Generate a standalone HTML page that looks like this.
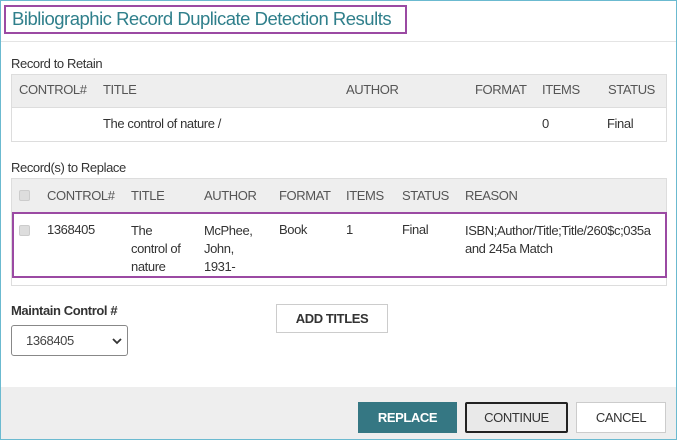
<!DOCTYPE html>
<html><head><meta charset="utf-8"><style>
*{margin:0;padding:0;box-sizing:border-box}
body{width:677px;height:440px;overflow:hidden;background:#fff;font-family:"Liberation Sans",Arial,sans-serif;font-size:13px;color:#333;letter-spacing:-0.4px;position:relative}
.a{position:absolute;white-space:nowrap}
.frame{position:absolute;left:0;top:0;width:677px;height:440px;border:1px solid #6bbad0}
.hdr{position:absolute;left:1px;top:41px;width:675px;border-top:1px solid #e4e4e4}
.tb{position:absolute;border:1px solid #ddd}
.th{background:#eee;position:absolute;left:0;right:0;border-bottom:1px solid #ddd}
.h{color:#555}
.cb{position:absolute;width:11px;height:11px;background:#ddd;border:1px solid #ccc;border-radius:2px}
.btn{position:absolute;display:flex;align-items:center;justify-content:center;font-size:13px;font-weight:bold}
</style></head><body>
<div class="frame"></div>
<div class="a" style="left:4px;top:5px;width:403px;height:29px;border:2px solid #9b4aa3"></div>
<div class="a" style="left:12px;top:8px;font-size:18.5px;color:#2f7f8b;letter-spacing:-0.5px">Bibliographic Record Duplicate Detection Results</div>
<div class="hdr"></div>

<div class="a" style="left:11px;top:56px">Record to Retain</div>
<div class="tb" style="left:11px;top:74px;width:656px;height:68px">
 <div class="th" style="top:0;height:33px"></div>
</div>
<div class="a h" style="left:19px;top:82px">CONTROL#</div>
<div class="a h" style="left:103px;top:82px">TITLE</div>
<div class="a h" style="left:346px;top:82px">AUTHOR</div>
<div class="a h" style="left:475px;top:82px">FORMAT</div>
<div class="a h" style="left:542px;top:82px">ITEMS</div>
<div class="a h" style="left:608px;top:82px">STATUS</div>
<div class="a" style="left:103px;top:116px">The control of nature /</div>
<div class="a" style="left:542px;top:116px">0</div>
<div class="a" style="left:607px;top:116px">Final</div>

<div class="a" style="left:11px;top:160px">Record(s) to Replace</div>
<div class="tb" style="left:11px;top:178px;width:656px;height:108px">
 <div class="th" style="top:0;height:34px"></div>
</div>
<div class="cb" style="left:19px;top:190px"></div>
<div class="a h" style="left:47px;top:188px">CONTROL#</div>
<div class="a h" style="left:131px;top:188px">TITLE</div>
<div class="a h" style="left:204px;top:188px">AUTHOR</div>
<div class="a h" style="left:279px;top:188px">FORMAT</div>
<div class="a h" style="left:346px;top:188px">ITEMS</div>
<div class="a h" style="left:402px;top:188px">STATUS</div>
<div class="a h" style="left:465px;top:188px">REASON</div>
<div class="a" style="left:12px;top:212px;width:655px;height:66px;border:2px solid #9b4aa3"></div>
<div class="cb" style="left:19px;top:225px"></div>
<div class="a" style="left:47px;top:222px">1368405</div>
<div class="a" style="left:131px;top:222px;line-height:18px">The<br>control of<br>nature</div>
<div class="a" style="left:204px;top:222px;line-height:18px">McPhee,<br>John,<br>1931-</div>
<div class="a" style="left:279px;top:222px">Book</div>
<div class="a" style="left:346px;top:222px">1</div>
<div class="a" style="left:402px;top:222px">Final</div>
<div class="a" style="left:465px;top:222px;line-height:18px">ISBN;Author/Title;Title/260$c;035a<br>and 245a Match</div>

<div class="a" style="left:11px;top:303px;font-weight:bold;color:#333">Maintain Control #</div>
<div class="a" style="left:11px;top:325px;width:117px;height:31px;border:1px solid #888;border-radius:3px"></div>
<div class="a" style="left:26px;top:333px;color:#444">1368405</div>
<svg class="a" style="left:112px;top:337px" width="10" height="8"><path d="M1 2 L5 6 L9 2" stroke="#333" stroke-width="1.8" fill="none"/></svg>
<div class="btn" style="left:276px;top:304px;width:112px;height:29px;border:1px solid #ccc;color:#333">ADD TITLES</div>

<div class="a" style="left:1px;top:387px;width:675px;height:52px;background:#eee"></div>
<div class="btn" style="left:358px;top:402px;width:99px;height:31px;background:#357783;color:#fff">REPLACE</div>
<div class="btn" style="left:465px;top:402px;width:103px;height:31px;background:#e9e9e9;border:2px solid #222;border-radius:2px;color:#333;font-weight:normal">CONTINUE</div>
<div class="btn" style="left:576px;top:402px;width:90px;height:31px;background:#fff;border:1px solid #ccc;color:#333;font-weight:normal">CANCEL</div>
</body></html>
